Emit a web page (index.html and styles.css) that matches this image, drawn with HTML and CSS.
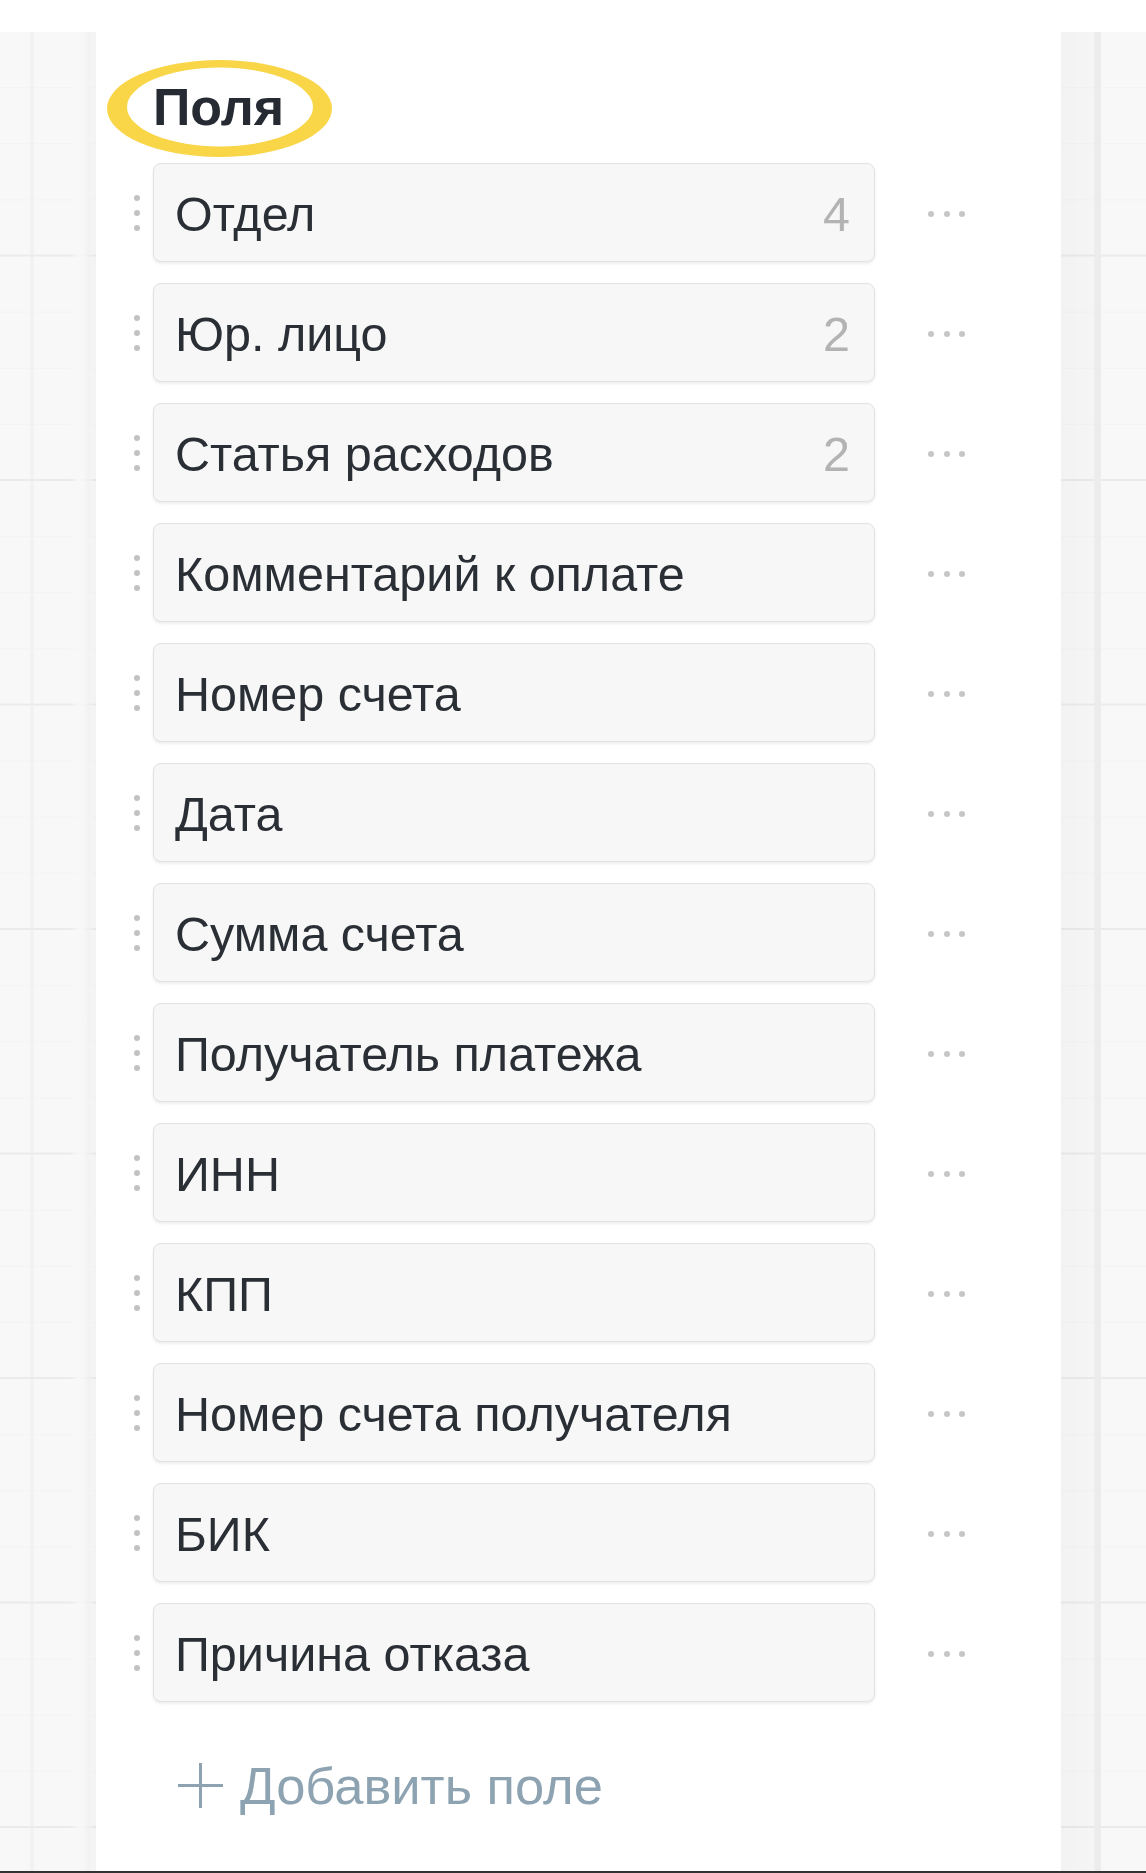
FILE: index.html
```html
<!DOCTYPE html>
<html lang="ru">
<head>
<meta charset="utf-8">
<title>Поля</title>
<link rel="stylesheet" href="styles.css">
</head>
<body>
<div class="topbar"></div>
<div class="canvas">
  <div class="gutter-left"></div>
  <section class="panel">
    <div class="heading-wrap">
      <h1 class="heading">
        <svg class="ring" viewBox="0 0 226 98" width="226" height="98" aria-hidden="true">
          <ellipse cx="112.5" cy="48.5" rx="112.5" ry="48.5" fill="#f9d548"/>
          <ellipse cx="113" cy="47" rx="93" ry="39.5" fill="#ffffff"/>
        </svg>
        <span class="heading-text">Поля</span>
      </h1>
    </div>
    <ul class="fields">
      <li class="row"><span class="handle"><i></i><i></i><i></i></span><div class="field"><span class="name">Отдел</span><span class="count">4</span></div><span class="menu"><i></i><i></i><i></i></span></li>
      <li class="row"><span class="handle"><i></i><i></i><i></i></span><div class="field"><span class="name">Юр. лицо</span><span class="count">2</span></div><span class="menu"><i></i><i></i><i></i></span></li>
      <li class="row"><span class="handle"><i></i><i></i><i></i></span><div class="field"><span class="name">Статья расходов</span><span class="count">2</span></div><span class="menu"><i></i><i></i><i></i></span></li>
      <li class="row"><span class="handle"><i></i><i></i><i></i></span><div class="field"><span class="name">Комментарий к оплате</span></div><span class="menu"><i></i><i></i><i></i></span></li>
      <li class="row"><span class="handle"><i></i><i></i><i></i></span><div class="field"><span class="name">Номер счета</span></div><span class="menu"><i></i><i></i><i></i></span></li>
      <li class="row"><span class="handle"><i></i><i></i><i></i></span><div class="field"><span class="name">Дата</span></div><span class="menu"><i></i><i></i><i></i></span></li>
      <li class="row"><span class="handle"><i></i><i></i><i></i></span><div class="field"><span class="name">Сумма счета</span></div><span class="menu"><i></i><i></i><i></i></span></li>
      <li class="row"><span class="handle"><i></i><i></i><i></i></span><div class="field"><span class="name">Получатель платежа</span></div><span class="menu"><i></i><i></i><i></i></span></li>
      <li class="row"><span class="handle"><i></i><i></i><i></i></span><div class="field"><span class="name">ИНН</span></div><span class="menu"><i></i><i></i><i></i></span></li>
      <li class="row"><span class="handle"><i></i><i></i><i></i></span><div class="field"><span class="name">КПП</span></div><span class="menu"><i></i><i></i><i></i></span></li>
      <li class="row"><span class="handle"><i></i><i></i><i></i></span><div class="field"><span class="name">Номер счета получателя</span></div><span class="menu"><i></i><i></i><i></i></span></li>
      <li class="row"><span class="handle"><i></i><i></i><i></i></span><div class="field"><span class="name">БИК</span></div><span class="menu"><i></i><i></i><i></i></span></li>
      <li class="row"><span class="handle"><i></i><i></i><i></i></span><div class="field"><span class="name">Причина отказа</span></div><span class="menu"><i></i><i></i><i></i></span></li>
    </ul>
    <div class="add">
      <svg class="plus" viewBox="0 0 45 45" width="45" height="45" aria-hidden="true">
        <path d="M22.5 0 V45 M0 22.5 H45" stroke="#8ea3b1" stroke-width="3" fill="none"/>
      </svg>
      <span class="add-text">Добавить поле</span>
    </div>
  </section>
  <div class="gutter-right"></div>
</div>
<div class="bottombar"></div>
</body>
</html>
```
FILE: styles.css
```css
* { box-sizing: border-box; }
html, body { margin: 0; padding: 0; }
body {
  width: 1146px;
  height: 1873px;
  overflow: hidden;
  font-family: "Liberation Sans", Arial, "Helvetica", sans-serif;
  color: #2a2e35;
  background: #ffffff;
  display: flex;
  flex-direction: column;
}
.topbar {
  height: 32px;
  flex: none;
  background: #ffffff;
}
.canvas {
  flex: 1;
  display: flex;
  background-color: #f8f8f8;
  background-image:
    linear-gradient(to bottom, transparent 223px, #ebebeb 223px, #ebebeb 226px, transparent 226px),
    linear-gradient(to bottom, transparent 55px, #f3f3f3 55px, #f3f3f3 57px, transparent 57px),
    linear-gradient(to right, transparent 30px, #f2f2f2 30px, #f2f2f2 34px, transparent 34px);
  background-size: 100% 224.5px, 100% 56.125px, 56px 100%;
  background-position: 0 0, 0 0, 0 0;
}
.bottombar {
  height: 2px;
  flex: none;
  background: #333333;
}
.gutter-left {
  width: 96px;
  flex: none;
  background: linear-gradient(to right, rgba(248,248,248,0) 70px, rgba(248,248,248,1) 80px, rgba(0,0,0,0.02) 96px);
}
.gutter-right {
  flex: 1;
  background:
    linear-gradient(to right, rgba(0,0,0,0.025) 0, rgba(0,0,0,0.012) 34px, #ececec 34px, #ececec 40px, transparent 40px);
}
.panel {
  width: 965px;
  flex: none;
  background: #ffffff;
  padding: 28px 0 0 0;
}
.heading-wrap {
  padding-left: 11px;
  height: 98px;
}
.heading {
  position: relative;
  width: 226px;
  height: 98px;
  margin: 0;
  display: flex;
  align-items: center;
  justify-content: center;
  font-size: 52px;
  font-weight: 700;
  line-height: 1;
  color: #262b33;
}
.ring {
  position: absolute;
  left: 0;
  top: 0;
}
.heading-text {
  position: relative;
  margin-top: -4px;
  margin-left: -3px;
}
.fields {
  list-style: none;
  margin: 5px 0 0 0;
  padding: 0;
  display: flex;
  flex-direction: column;
  gap: 21px;
}
.row {
  display: flex;
  align-items: center;
  height: 99px;
}
.handle {
  width: 57px;
  display: flex;
  flex-direction: column;
  align-items: center;
  gap: 9px;
  padding-left: 30px;
  padding-right: 6px;
}
.handle i {
  display: block;
  width: 6px;
  height: 6px;
  border-radius: 50%;
  background: #c2c2c2;
}
.field {
  width: 722px;
  height: 99px;
  flex: none;
  display: flex;
  align-items: center;
  justify-content: space-between;
  padding: 3px 24px 0 21px;
  background: #f7f7f7;
  border: 1px solid #e2e2e2;
  border-radius: 8px;
  box-shadow: 0 2px 3px rgba(0,0,0,0.07);
}
.name {
  font-size: 48.5px;
  line-height: 1;
  color: #2a2e35;
  white-space: nowrap;
}
.count {
  font-size: 48.5px;
  line-height: 1;
  color: #b3b3b3;
}
.menu {
  display: flex;
  gap: 9.5px;
  margin-left: 53px;
  margin-top: 3px;
}
.menu i {
  display: block;
  width: 6px;
  height: 6px;
  border-radius: 50%;
  background: #c6c6c6;
}
.add {
  display: flex;
  align-items: center;
  gap: 17px;
  margin: 61px 0 0 82px;
  height: 45px;
}
.plus { flex: none; }
.add-text {
  font-size: 52.5px;
  line-height: 1;
  color: #8ea3b1;
  margin-top: 2px;
}
```
